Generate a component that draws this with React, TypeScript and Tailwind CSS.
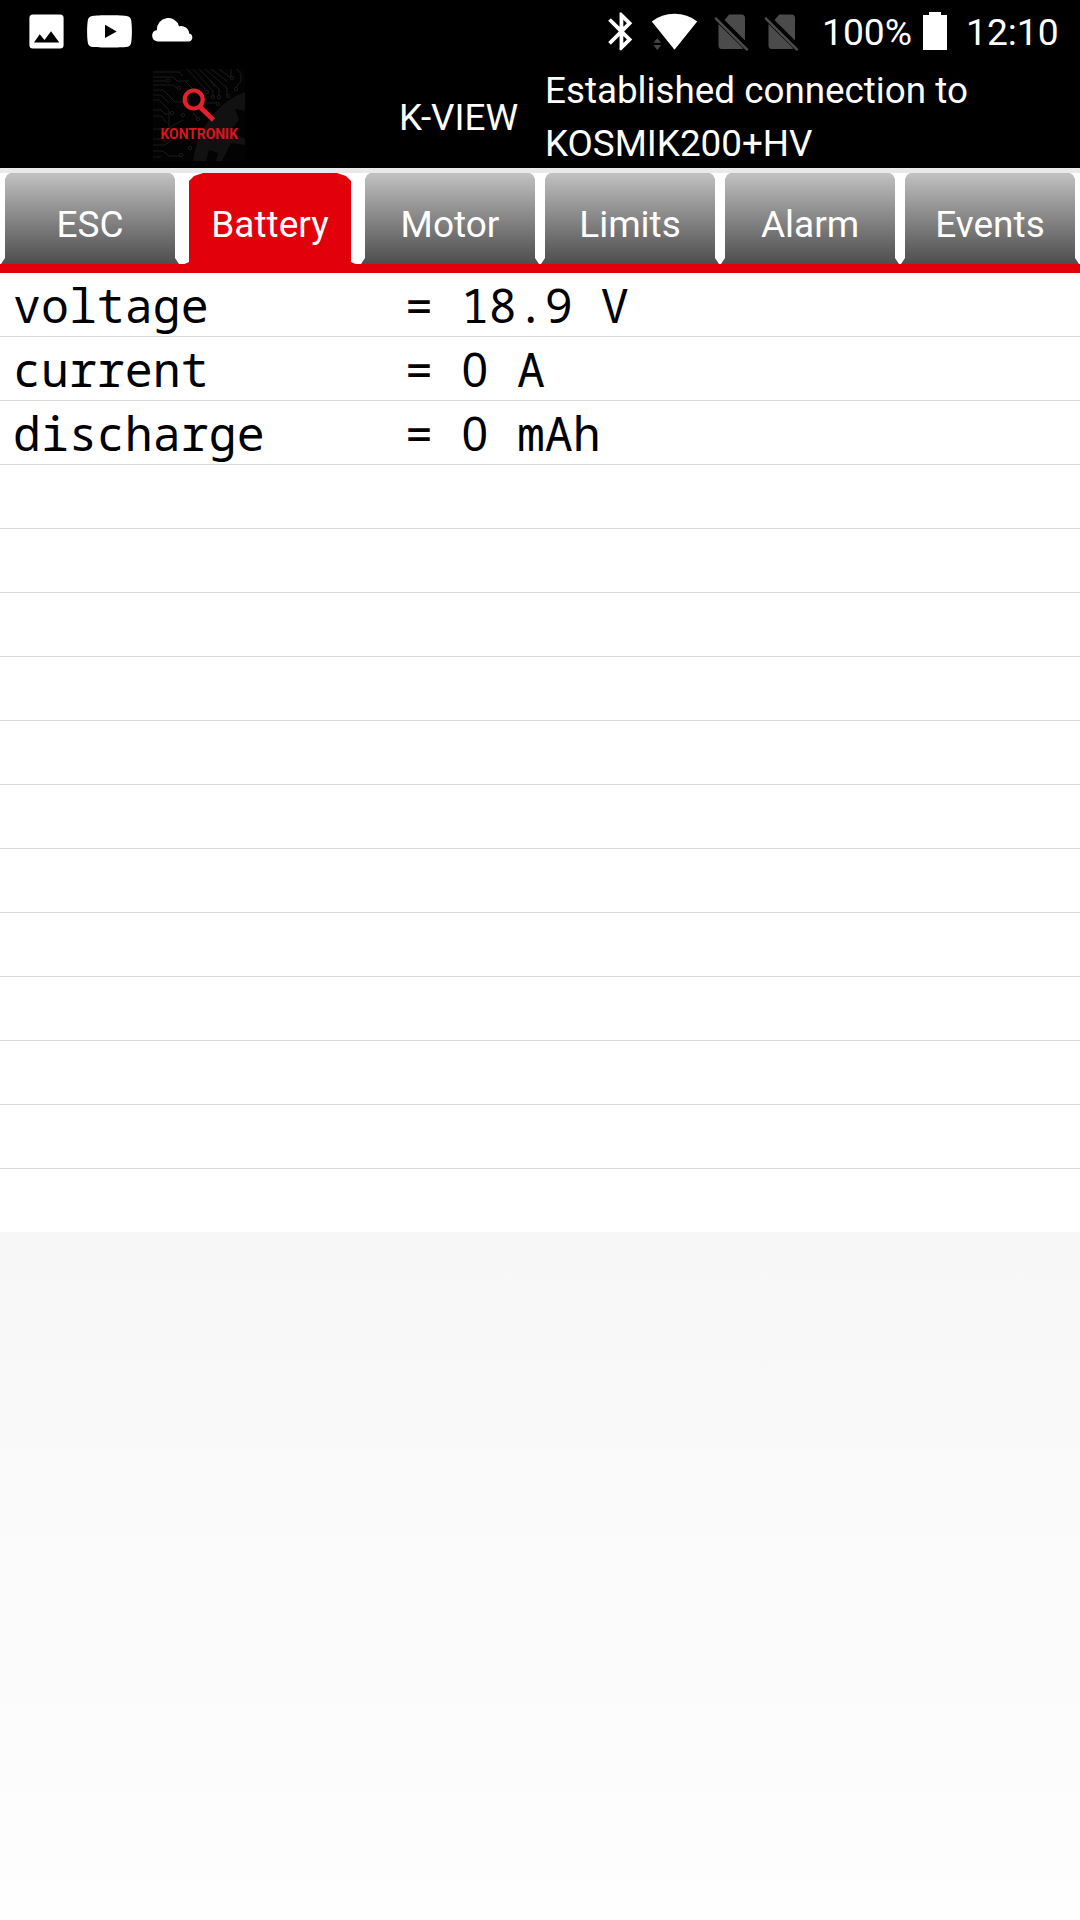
import React from "react";

const TABS = ["ESC", "Battery", "Motor", "Limits", "Alarm", "Events"];
const ACTIVE = "Battery";

const ROWS: [string, string][] = [
  ["voltage", "18.9 V"],
  ["current", "0 A"],
  ["discharge", "0 mAh"],
];
const ROW_COUNT = 15;

/* Fixed-pitch text with a plain (unslashed) zero. */
function Mono({ text, className = "" }: { text: string; className?: string }) {
  return (
    <span
      className={
        "whitespace-pre font-['Noto_Sans_Mono','DejaVu_Sans_Mono',monospace] text-[46.6px] leading-[63px] " + className
      }
    >
      {text.split(/(0)/).map((part, i) =>
        part === "0" ? (
          <span key={i} className="inline-block w-[28px] text-center font-['Noto_Sans',sans-serif] leading-none">
            0
          </span>
        ) : (
          part
        ),
      )}
    </span>
  );
}

function SimOff() {
  return (
    <svg className="h-[38px] w-[35px]" viewBox="0 0 35 38" fill="#4b4b4b">
      <path d="M10.5 7 L15.2 1.6 H27.5 a3.5 3.5 0 0 1 3.5 3.5 V27.5z" />
      <path d="M4.5 11 V32.5 a3.5 3.5 0 0 0 3.5 3.5 H27.5 q1.2 0 2-.4z" />
      <path d="M0.3 5.7 L2.1 3.9 L34.5 36.2 L32.7 38z" />
    </svg>
  );
}

function StatusBar() {
  return (
    <div className="flex h-[66px] items-start bg-black font-['Roboto',sans-serif] text-white">
      <svg className="mt-3.5 ml-[29px] h-[35px] w-[35px]" viewBox="0 0 35 35">
        <rect x="0.4" y="0.4" width="34.2" height="34.2" rx="3.5" fill="#fff" />
        <path d="M5 28.6 L10.7 20.3 L15.5 26 L22 17.3 L30.3 28.6z" fill="#000" />
      </svg>
      <svg className="mt-[15px] ml-[23px] h-[33px] w-[45px]" viewBox="0 0 45 33">
        <path
          d="M22.5 .3 C31 .3 37 .6 39.5 1 C42.5 1.4 44 3 44.3 6 C45.1 12 45.1 21 44.3 27 C44 30 42.5 31.6 39.5 32 C35 32.6 10 32.6 5.5 32 C2.5 31.6 1 30 .7 27 C-.1 21-.1 12 .7 6 C1 3 2.5 1.4 5.5 1 C8 .6 14 .3 22.5 .3z"
          fill="#fff"
        />
        <path d="M18 9.7 L29.7 16.4 L18 23z" fill="#000" />
      </svg>
      <svg className="mt-[18px] ml-[19px] h-6 w-[43px]" viewBox="0 0 43 24" fill="#fff">
        <path d="M6.5 23.4 A5.8 5.8 0 0 1 6 11.9 A11.2 11.2 0 0 1 28 8.3 A8 8 0 0 1 38.2 15.6 A4 4 0 0 1 38.2 23.4z" />
      </svg>
      <svg className="mt-[12px] ml-[414px] h-[39px] w-[25px]" viewBox="4.9 1.8 13.2 20.5" fill="#fff">
        <path d="M17.71 7.71L12 2h-1v7.59L6.41 5 5 6.41 10.59 12 5 17.59 6.41 19 11 14.41V22h1l5.71-5.71-4.3-4.29 4.3-4.29zM13 5.83l1.88 1.88L13 9.59V5.83zm1.88 10.46L13 18.17v-3.76l1.88 1.88z" />
      </svg>
      <svg className="mt-[13px] ml-[18px] h-[38px] w-[47px]" viewBox="0 0 47 38">
        <path d="M.8 8.5 Q10.5 .8 23.5 .8 Q36.5 .8 46.2 8.5 L23.5 36.8z" fill="#fff" />
        <path d="M2.3 29.8 L6.3 25.3 L10.3 29.8z M2.3 32 L6.3 36.9 L10.3 32z" fill="#454545" />
      </svg>
      <div className="mt-[13px] ml-[16px] flex gap-[15px]">
        <SimOff />
        <SimOff />
      </div>
      <span className="mt-[10px] ml-[23px] w-[101px] text-[37.2px] leading-[45px]">100%</span>
      <svg className="mt-3 h-[38px] w-6" viewBox="0 0 24 38" fill="#fff">
        <path d="M6 0 H18 V3 H24 V38 H0 V3 H6z" />
      </svg>
      <span className="mt-[10px] ml-[19px] text-[37.2px] leading-[45px]">12:10</span>
    </div>
  );
}

function Logo() {
  return (
    <svg className="h-[92px] w-[92px]" viewBox="0 0 92 92">
      <rect width="92" height="92" fill="#030303" />
      <g fill="none" stroke="#1b1b1b" strokeWidth="1">
        <path d="M0 3H26l4 4 M0 8H20l4 4H36 M0 12H13 M0 16H20l4 3 M0 21H10l12 12H34 M0 26H8l8 8 M0 31H6l10 10V58 M0 41H8l4 4H17 M0 47H8l6 7 M0 60H14l16-9 M0 70H8l5 4 M0 76H12l8-6 M0 82H10l6 5H26 M0 88H8" />
        <path d="M34 0l18 20 M40 0l20 22V28 M46 0l20 20V27 M52 0l22 19V26 M58 0l16 12 M66 0l12 9 M78 0V8 M84 0l4 5V12l-5 6 M50 34H64 M40 44l5 5 M56 10l6 8 M32 12l8 8" />
        <circle cx="15" cy="11.5" r="1.7" />
        <circle cx="26" cy="19" r="1.7" />
        <circle cx="19" cy="44" r="1.7" />
        <circle cx="30" cy="46" r="1.7" />
        <circle cx="54" cy="23" r="1.7" />
        <circle cx="60" cy="28" r="1.7" />
        <circle cx="66" cy="28" r="1.7" />
        <circle cx="75" cy="27" r="1.7" />
        <circle cx="79" cy="9" r="1.7" />
        <circle cx="83" cy="20" r="1.7" />
        <circle cx="65" cy="35" r="1.7" />
        <circle cx="45" cy="50" r="1.7" />
        <circle cx="28" cy="86" r="1.7" />
        <circle cx="37" cy="79" r="1.7" />
      </g>
      <path
        d="M40 92 C44 60 66 32 92 23 V42 L82 40 L86 51 L77 62 L92 70 V76 L78 74 L69 92 H63 L65 84 L56 81 L53 92z"
        fill="#111111"
      />
      <circle cx="40.7" cy="30.5" r="9" fill="none" stroke="#e4202a" strokeWidth="4.2" />
      <path d="M46.5 37.5L60.5 51" stroke="#e4202a" strokeWidth="4.6" />
      <text
        x="7.5"
        y="70"
        textLength="77.5"
        lengthAdjust="spacingAndGlyphs"
        className="fill-[#d8161f] font-['Roboto',sans-serif] text-[15.5px] font-bold"
      >
        KONTRONIK
      </text>
    </svg>
  );
}

function Header() {
  return (
    <header className="flex h-[102px] bg-black font-['Roboto',sans-serif] text-[36.8px] text-white">
      <div className="mt-[3px] ml-[153px]">
        <Logo />
      </div>
      <span className="mt-[25px] ml-[154px] w-[146px] leading-[53px]">K-VIEW</span>
      <p className="-mt-[2px] w-[460px] leading-[53px]">Established connection to KOSMIK200+HV</p>
    </header>
  );
}

function Tab({ label }: { label: string }) {
  const active = label === ACTIVE;
  return (
    <div className="grid h-full w-[180px] justify-items-center">
      <div
        className={
          active
            ? "col-start-1 row-start-1 h-[93px] w-full bg-[#e2000b] [clip-path:polygon(9px_8px,14px_3px,23px_0,157px_0,166px_3px,171px_8px,171px_89px,180px_93px,0_93px,9px_89px)]"
            : "col-start-1 row-start-1 h-[91px] w-full bg-linear-to-b from-[#c2c2c2] via-[#868686] to-[#4e4e4e] [clip-path:polygon(5px_6px,7px_2px,10px_0,170px_0,173px_2px,175px_6px,175px_85px,179px_91px,1px_91px,5px_85px)]"
        }
      />
      <span className="z-10 col-start-1 row-start-1 mt-[27px] text-[37px] leading-[50px]">{label}</span>
    </div>
  );
}

export default function App() {
  return (
    <div className="flex h-[1920px] w-[1080px] flex-col overflow-hidden bg-white">
      <StatusBar />
      <Header />
      <nav className="flex h-[105px] border-t-[5px] border-[#e9e9e9] bg-linear-to-b from-white from-[91px] to-[#e2000b] to-[91px] font-['Roboto',sans-serif] text-white">
        {TABS.map((t) => (
          <Tab key={t} label={t} />
        ))}
      </nav>
      <ul className="divide-y divide-[#dadada] bg-white text-black">
        {Array.from({ length: ROW_COUNT }, (_, i) => (
          <li key={i} className="box-content h-[63px]">
            {ROWS[i] && (
              <div className="flex pt-px pl-[13px]">
                <Mono text={ROWS[i][0]} className="w-[392px]" />
                <Mono text={"= " + ROWS[i][1]} />
              </div>
            )}
          </li>
        ))}
      </ul>
      <div className="flex-1 bg-linear-to-b from-[#f7f7f7] to-[#fefefe]" />
    </div>
  );
}
